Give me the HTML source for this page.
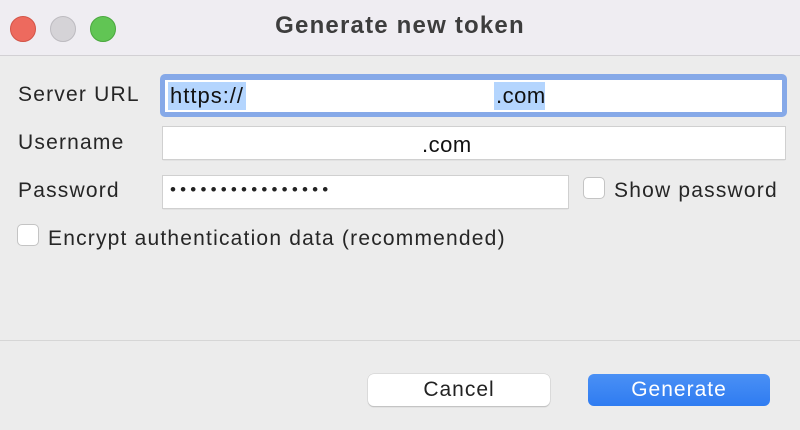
<!DOCTYPE html>
<html><head><style>
body{margin:0;width:800px;height:430px;background:#ececec;font-family:"Liberation Sans",sans-serif;position:relative;overflow:hidden;color:#222}
.a{position:absolute;white-space:nowrap}
.title{left:0;top:0;width:800px;height:55px;background:#efedf2;border-bottom:1px solid #d2d0d4}
.dot{width:24px;height:24px;border-radius:50%;top:16px}
.lbl{font-size:21px;letter-spacing:1.2px;color:#262626}
.fld{background:#fff;box-shadow:0 0 0 1px #d0d0d0, 0 1px 1px #bbb}
.cb{width:20px;height:20px;background:#fff;border:1px solid #c4c4c4;border-radius:5px}
.btn{height:32px;border-radius:6px;font-size:21px;letter-spacing:1px;text-align:center;line-height:32px}
</style></head><body>
<div class="a title"></div>
<div class="a dot" style="left:10px;background:#ed6a5e;border:0.5px solid #d35447"></div>
<div class="a dot" style="left:50px;background:#d5d3d7;border:0.5px solid #bdbbc0"></div>
<div class="a dot" style="left:90px;background:#61c554;border:0.5px solid #4aa83e"></div>
<div class="a" style="left:0;width:800px;top:12px;text-align:center;font-size:24px;letter-spacing:1.2px;font-weight:bold;color:#3d3d3d">Generate new token</div>

<div class="a lbl" style="left:18px;top:83px">Server URL</div>
<div class="a" style="left:160px;top:74px;width:627px;height:43px;background:#86a9e8;border-radius:5px"></div>
<div class="a" style="left:165px;top:80px;width:617px;height:32px;background:#fff"></div>
<div class="a" style="left:168px;top:82px;width:78px;height:28px;background:#b4d5fe"></div>
<div class="a" style="left:494px;top:82px;width:51px;height:28px;background:#b4d5fe"></div>
<div class="a" style="left:170px;top:83px;font-size:22px;letter-spacing:1px;color:#111">https://</div>
<div class="a" style="left:496px;top:83px;font-size:22px;letter-spacing:0.5px;color:#111">.com</div>

<div class="a lbl" style="left:18px;top:131px">Username</div>
<div class="a fld" style="left:163px;top:127px;width:622px;height:32px"></div>
<div class="a" style="left:422px;top:132px;font-size:22px;letter-spacing:0.5px;color:#111">.com</div>

<div class="a lbl" style="left:18px;top:179px">Password</div>
<div class="a fld" style="left:163px;top:176px;width:405px;height:32px"></div>
<div class="a" style="left:170px;top:180px;font-size:17px;letter-spacing:4.2px;color:#222">••••••••••••••••</div>
<div class="a cb" style="left:583px;top:177px"></div>
<div class="a lbl" style="left:614px;top:179px">Show password</div>

<div class="a cb" style="left:17px;top:224px"></div>
<div class="a lbl" style="left:48px;top:227px">Encrypt authentication data (recommended)</div>

<div class="a" style="left:0;top:340px;width:800px;height:1px;background:#d6d6d6"></div>
<div class="a btn" style="left:368px;top:374px;width:182px;background:#fff;box-shadow:0 0 0 0.5px #ccc,0 1px 1px #aaa;color:#222">Cancel</div>
<div class="a btn" style="left:588px;top:374px;width:182px;background:linear-gradient(#4a90f5,#2f7cf1);color:#fff">Generate</div>
</body></html>
